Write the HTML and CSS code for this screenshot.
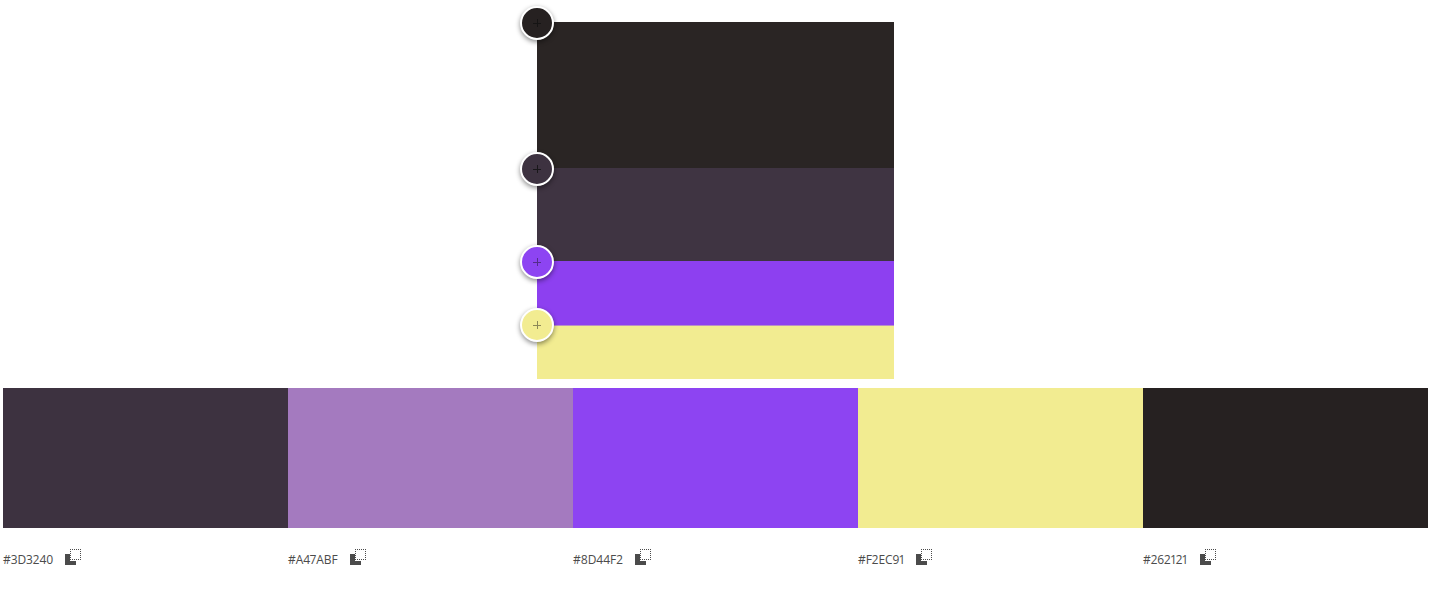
FILE: index.html
```html
<!DOCTYPE html>
<html>
<head>
<meta charset="utf-8">
<link rel="stylesheet" href="styles.css">
<title>Color theme</title>
</head>
<body>
<svg class="defs" width="0" height="0">
  <symbol id="copy" viewBox="0 0 16 16">
    <path class="copy-back" d="M0 5h5v7h6v4H0z"/>
    <rect class="copy-fill" x="5" y="0" width="11" height="11"/>
    <path class="copy-dots" d="M5 .5h11M5 10.5h11M5.5 2v8M15.5 2v8"/>
  </symbol>
</svg>
<div class="stage">
  <div class="band band-1"></div>
  <div class="band band-2"></div>
  <div class="band band-3"></div>
  <div class="band band-4"></div>
  <div class="pin pin-1"><span class="plus"></span></div>
  <div class="pin pin-2"><span class="plus"></span></div>
  <div class="pin pin-3"><span class="plus"></span></div>
  <div class="pin pin-4"><span class="plus"></span></div>
</div>
<div class="palette">
  <div class="color">
    <div class="swatch swatch-1"></div>
    <div class="label"><span>#3D3240</span><svg class="copy"><use href="#copy"/></svg></div>
  </div>
  <div class="color">
    <div class="swatch swatch-2"></div>
    <div class="label"><span>#A47ABF</span><svg class="copy"><use href="#copy"/></svg></div>
  </div>
  <div class="color">
    <div class="swatch swatch-3"></div>
    <div class="label"><span>#8D44F2</span><svg class="copy"><use href="#copy"/></svg></div>
  </div>
  <div class="color">
    <div class="swatch swatch-4"></div>
    <div class="label"><span>#F2EC91</span><svg class="copy"><use href="#copy"/></svg></div>
  </div>
  <div class="color">
    <div class="swatch swatch-5"></div>
    <div class="label"><span>#262121</span><svg class="copy"><use href="#copy"/></svg></div>
  </div>
</div>
</body>
</html>
```

FILE: styles.css
```css
body {
	margin: 0;
	padding: 22px 4px 0 3px;
	background-color: white;
	font-family: "Open Sans", "Liberation Sans", sans-serif;
	font-size: 12px;
	color: #4b4b4b;
}
.defs {
	display: block;
	height: 0;
}
.stage {
	position: relative;
	width: 357px;
	height: 357px;
	margin: 0 auto;
	display: flex;
	flex-direction: column;
}
.band-1 { height: 146px; background-color: #2a2524; }
.band-2 { height: 93px; background-color: #3f3442; }
.band-3 {
	box-sizing: border-box;
	height: 65px;
	background-color: #8d40f0;
	border-bottom: 1px solid #b98fc4;
}
.band-4 { height: 53px; background-color: #f2ec91; }
.pin {
	position: absolute;
	left: -17px;
	width: 30px;
	height: 30px;
	border: 2px solid white;
	border-radius: 50%;
	box-shadow: 0 2px 5px rgba(0, 0, 0, 0.45);
	display: flex;
	align-items: center;
	justify-content: center;
}
.pin-1 { top: -16px; background-color: #262121; }
.pin-2 { top: 130px; background-color: #3d3240; }
.pin-3 { top: 223px; background-color: #8d44f2; }
.pin-4 { top: 286px; background-color: #f2ec91; }
.plus {
	width: 8px;
	height: 8px;
	opacity: 0.45;
	background:
		linear-gradient(#111, #111) center / 8px 1px no-repeat,
		linear-gradient(#111, #111) center / 1px 8px no-repeat;
}
.pin-1 .plus, .pin-2 .plus { opacity: 0.8; }
.palette {
	display: flex;
	margin-top: 9px;
}
.color {
	flex: 1;
}
.swatch {
	height: 140px;
}
.swatch-1 { background-color: #3d3240; }
.swatch-2 { background-color: #a47abf; }
.swatch-3 { background-color: #8d44f2; }
.swatch-4 { background-color: #f2ec91; }
.swatch-5 { background-color: #262121; }
.label {
	display: flex;
	align-items: flex-start;
	margin-top: 21px;
	height: 16px;
}
.label span {
	margin-top: 2px;
	line-height: 18px;
	letter-spacing: -0.05px;
	font-variant-numeric: proportional-nums;
}
.copy {
	width: 16px;
	height: 16px;
	margin-left: 12px;
	flex: none;
}
.copy-back {
	fill: #4b4b4b;
}
.copy-fill {
	fill: white;
}
.copy-dots {
	fill: none;
	stroke: #4b4b4b;
	stroke-width: 1;
	stroke-dasharray: 1 1;
}
```
